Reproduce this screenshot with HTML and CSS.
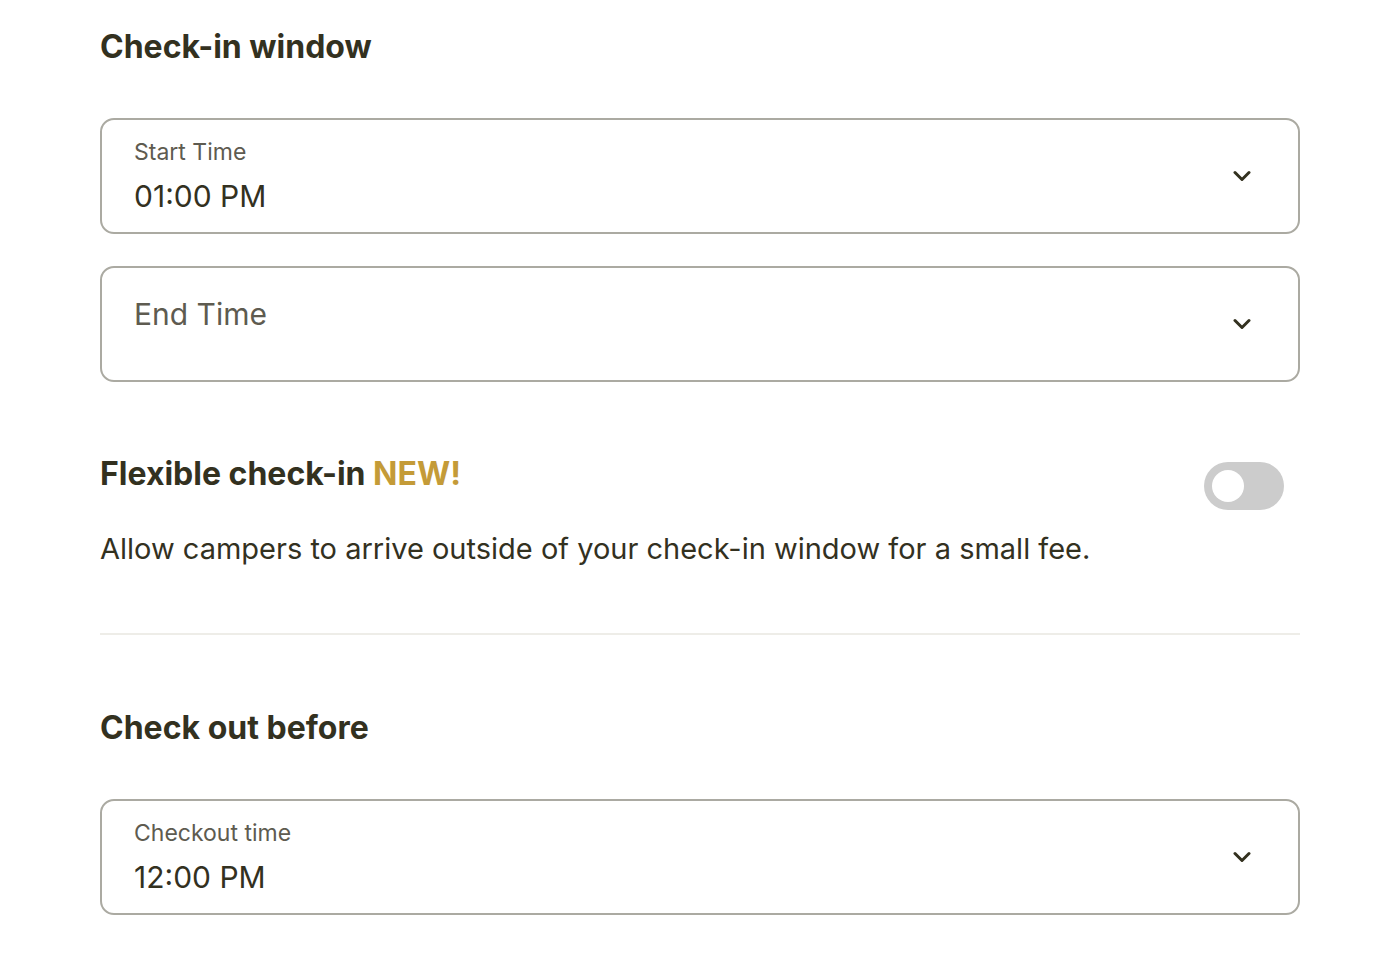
FILE: index.html
```html
<!DOCTYPE html>
<html>
<head>
<title>Check-in settings</title>
<link rel="stylesheet" href="styles.css">
</head>
<body>
<div class="page">

<section class="block">
<h2 class="title">Check-in window</h2>

<div class="select">
<div class="select-text">
<span class="select-label">Start Time</span>
<span class="select-value">01:00 PM</span>
</div>
<svg class="chevron" width="18" height="12" viewBox="0 0 18 12"><path d="M2 2.5 L9 9.5 L16 2.5" fill="none" stroke="#33311f" stroke-width="3" stroke-linecap="round" stroke-linejoin="round"/></svg>
</div>

<div class="select">
<div class="select-text">
<span class="select-placeholder">End Time</span>
</div>
<svg class="chevron" width="18" height="12" viewBox="0 0 18 12"><path d="M2 2.5 L9 9.5 L16 2.5" fill="none" stroke="#33311f" stroke-width="3" stroke-linecap="round" stroke-linejoin="round"/></svg>
</div>
</section>

<section class="flex-row">
<div class="flex-text">
<h3 class="subtitle">Flexible check-in <span class="new">NEW!</span></h3>
<p class="desc">Allow campers to arrive outside of your check-in window for a small fee.</p>
</div>
<div class="toggle"><div class="knob"></div></div>
</section>

<hr class="divider">

<section class="block">
<h2 class="title">Check out before</h2>

<div class="select">
<div class="select-text">
<span class="select-label">Checkout time</span>
<span class="select-value">12:00 PM</span>
</div>
<svg class="chevron" width="18" height="12" viewBox="0 0 18 12"><path d="M2 2.5 L9 9.5 L16 2.5" fill="none" stroke="#33311f" stroke-width="3" stroke-linecap="round" stroke-linejoin="round"/></svg>
</div>
</section>

</div>
</body>
</html>
```

FILE: styles.css
```css
body { margin: 0; font-family: Inter, "Liberation Sans", sans-serif; color: #33311f; background: #fff; }
.page { width: 1200px; margin-left: 100px; padding-top: 27px; }
.title { font-size: 32px; line-height: 40px; font-weight: 700; margin: 0 0 51px; }
.select { height: 116px; box-sizing: border-box; border: 2px solid #abaaa2; border-radius: 14px; padding: 0 47px 0 32px; display: flex; align-items: center; justify-content: space-between; margin-bottom: 32px; }
.select-text { display: flex; flex-direction: column; }
.select-label { font-size: 23px; line-height: 28px; color: #5e5b50; }
.select-value { font-size: 30px; line-height: 36px; margin-top: 12px; }
.select-placeholder { font-size: 30px; line-height: 36px; color: #5e5b50; margin-bottom: 20px; }
.chevron { display: block; }
.flex-row { display: flex; justify-content: space-between; align-items: flex-start; margin-top: 72px; }
.subtitle { font-size: 32px; line-height: 40px; font-weight: 700; margin: 0; }
.new { color: #c49b38; }
.desc { font-size: 29px; line-height: 36px; margin: 37px 0 0; }
.toggle { width: 80px; height: 48px; border-radius: 24px; background: #cccccc; margin: 8px 16px 0 0; position: relative; }
.knob { position: absolute; left: 8px; top: 8px; width: 32px; height: 32px; border-radius: 50%; background: #fff; }
.divider { border: 0; border-top: 2px solid #eeede8; margin: 66px 0 73px; }
```
